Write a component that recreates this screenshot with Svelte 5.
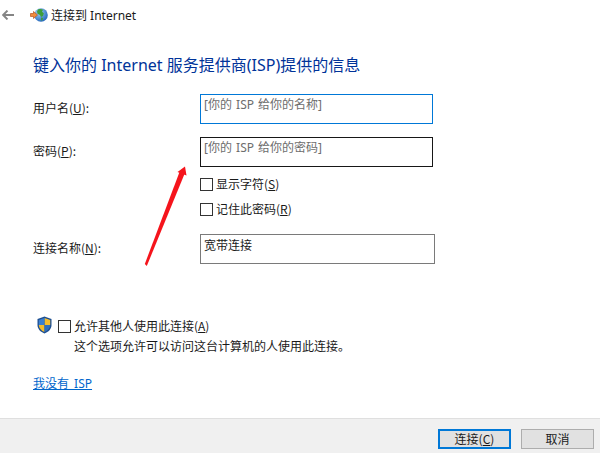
<script>
	const fields = [
		{ label: "用户名", key: "U", hint: "[你的 ISP 给你的名称]", cls: "focus" },
		{ label: "密码", key: "P", hint: "[你的 ISP 给你的密码]", cls: "hover" }
	];
	const checks = [
		{ label: "显示字符", key: "S" },
		{ label: "记住此密码", key: "R" }
	];
</script>

<div class="window">
	<header class="titlebar">
		<svg class="back" width="12" height="10" viewBox="0 0 12 10">
			<path d="M12 5H1.500M5.500 .6 1.100 5l4.400 4.400" fill="none" stroke="#858585" stroke-width="2" />
		</svg>
		<svg class="globe" width="18" height="14" viewBox="0 0 18 14">
			<defs>
				<radialGradient id="sea" cx="0.35" cy="0.3" r="0.8">
					<stop offset="0" stop-color="#9fd4f5" />
					<stop offset="1" stop-color="#1c5fb8" />
				</radialGradient>
			</defs>
			<circle cx="11" cy="7" r="6.800" fill="url(#sea)" />
			<path d="M8 1.500c2-.8 4-.6 5 .3l-1 2 1.800 1.500-.8 2.700-2 1-1-2-2.500-1.200-.5-2.300z" fill="#3f9e3a" />
			<path d="M11 9.500l2 .5-.5 2.300-1.500.2z" fill="#3f9e3a" />
			<path d="M0.500 5.500h3V3.500L7.500 7 3.500 10.500V8.500h-3z" fill="#f08a3c" stroke="#b9541c" stroke-width=".7" />
		</svg>
		<span class="wintitle">连接到 Internet</span>
	</header>

	<main class="content">
		<h1>键入你的 Internet 服务提供商(ISP)提供的信息</h1>

		<div class="form">
			{#each fields as f}
				<div class="row">
					<span class="label">{f.label}(<u>{f.key}</u>):</span>
					<div class="input {f.cls}"><span class="hint">{f.hint}</span></div>
				</div>
			{/each}

			<div class="checks">
				{#each checks as c}
					<div class="check"><span class="box"></span><span class="check-text">{c.label}(<u>{c.key}</u>)</span></div>
				{/each}
			</div>

			<div class="row last">
				<span class="label">连接名称(<u>N</u>):</span>
				<div class="input plain"><span>宽带连接</span></div>
			</div>
		</div>

		<div class="share">
			<svg class="shield" width="15" height="18" viewBox="0 0 15 18">
				<path d="M7.500 .5 14.500 3v6c0 4-3 7-7 8.500C3.500 16 .5 13 .5 9V3z" fill="#1d4f91" />
				<path d="M7.500 2 13.200 4v5H7.500z" fill="#f4bd2e" />
				<path d="M7.500 2 1.800 4v5h5.700z" fill="#3a7fd0" />
				<path d="M1.800 9h5.700v7C4.500 14.800 2 12.500 1.800 9z" fill="#f4bd2e" />
				<path d="M7.500 9h5.700c-.2 3.500-2.700 5.800-5.700 7z" fill="#2f6fc0" />
			</svg>
			<span class="box"></span>
			<div class="share-text">
				<div>允许其他人使用此连接(<u>A</u>)</div>
				<div>这个选项允许可以访问这台计算机的人使用此连接。</div>
			</div>
		</div>

		<a class="link" href="#top">我没有 ISP</a>
	</main>

	<footer class="footer">
		<button class="primary">连接(<u>C</u>)</button>
		<button>取消</button>
	</footer>

	<svg class="arrow" width="50" height="112" viewBox="0 0 50 112">
		<path d="M.8 108 2.800 110 40.500 18 35.500 16z" fill="#f5141c" />
		<path d="M41 10.500 33.500 16 42.500 19.500z" fill="#f5141c" />
	</svg>
</div>

<style>
	:global(body) {
		margin: 0;
		background: #fff;
	}

	.window {
		position: relative;
		width: 600px;
		height: 453px;
		display: flex;
		flex-direction: column;
		overflow: hidden;
		font-family: "Noto Sans CJK SC", "Liberation Sans", sans-serif;
		font-size: 12px;
		color: #1a1a1a;
		background: #fff;
	}

	.titlebar {
		height: 30px;
		display: flex;
		align-items: center;
		flex-shrink: 0;
		padding-left: 2px;
	}

	.back {
		margin-right: 16px;
	}

	.globe {
		margin-right: 3px;
	}

	.wintitle {
		font-family: "Noto Sans", "Noto Sans CJK SC", sans-serif;
	}

	.content {
		flex: 1;
		padding: 0 0 0 33px;
	}

	h1 {
		margin: 24px 0 0;
		height: 22px;
		font-size: 16px;
		font-weight: 400;
		line-height: 22px;
		color: #003399;
		font-family: "Noto Sans", "Noto Sans CJK SC", sans-serif;
	}

	.form {
		margin-top: 18px;
		display: flex;
		flex-direction: column;
	}

	.row {
		display: flex;
		align-items: center;
		height: 30px;
		margin-bottom: 13px;
	}

	.label {
		width: 167px;
		flex-shrink: 0;
		padding-bottom: 3px;
	}

	.input {
		box-sizing: border-box;
		width: 233px;
		height: 30px;
		padding: 0 3px;
		line-height: 18px;
		border: 1px solid #7a7a7a;
	}

	.focus {
		border-color: #0078d7;
	}

	.hover {
		border-color: #171717;
	}

	.plain {
		width: 235px;
		padding-top: 1px;
	}

	.hint {
		color: #6d6d6d;
		word-spacing: 1px;
		font-family: "Noto Sans", "Noto Sans CJK SC", sans-serif;
	}

	.checks {
		margin: -5px 0 0 167px;
		display: flex;
		flex-direction: column;
		gap: 7px;
	}

	.check {
		display: flex;
		align-items: center;
		gap: 3px;
		height: 18px;
	}

	.check-text {
		margin-top: -2px;
	}

	.box {
		box-sizing: border-box;
		display: block;
		width: 13px;
		height: 13px;
		flex-shrink: 0;
		border: 1px solid #333;
	}

	.last {
		margin-top: 16px;
		margin-bottom: 0;
	}

	.share {
		margin: 52px 0 0 4px;
		display: flex;
		align-items: flex-start;
	}

	.shield {
		margin-right: 6px;
	}

	.share .box {
		margin: 4px 3px 0 0;
	}

	.share-text {
		line-height: 20px;
	}

	.link {
		display: inline-block;
		margin-top: 18px;
		color: #0066cc;
		line-height: 20px;
		word-spacing: 2px;
		font-family: "Noto Sans", "Noto Sans CJK SC", sans-serif;
	}

	.footer {
		box-sizing: border-box;
		height: 35px;
		flex-shrink: 0;
		display: flex;
		justify-content: flex-end;
		align-items: flex-start;
		gap: 10px;
		padding: 10px 6px 0 0;
		background: #f0f0f0;
		border-top: 1px solid #dfdfdf;
	}

	button {
		box-sizing: border-box;
		width: 73px;
		height: 20px;
		padding: 0 0 1px;
		font: inherit;
		line-height: 16px;
		color: #1a1a1a;
		background: #e1e1e1;
		border: 1px solid #adadad;
	}

	.primary {
		border: 2px solid #0078d7;
	}

	/* red annotation drawn over the dialog */
	.arrow {
		position: absolute;
		left: 144px;
		top: 156px;
	}
</style>
